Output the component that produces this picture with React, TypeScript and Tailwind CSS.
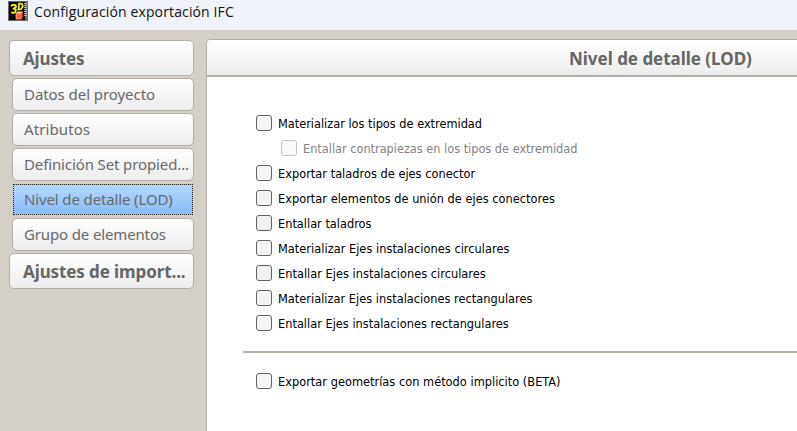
import React from "react";

type Option = { label: string; disabled?: boolean; spacing?: string };

const OPTIONS: Option[] = [
  { label: "Materializar los tipos de extremidad", spacing: "tracking-[-0.01px]" },
  { label: "Entallar contrapiezas en los tipos de extremidad", disabled: true, spacing: "tracking-[-0.02px]" },
  { label: "Exportar taladros de ejes conector", spacing: "tracking-[0.02px]" },
  { label: "Exportar elementos de unión de ejes conectores", spacing: "tracking-[0.02px]" },
  { label: "Entallar taladros" },
  { label: "Materializar Ejes instalaciones circulares", spacing: "tracking-[0.03px]" },
  { label: "Entallar Ejes instalaciones circulares", spacing: "tracking-[0.02px]" },
  { label: "Materializar Ejes instalaciones rectangulares", spacing: "tracking-[0.02px]" },
  { label: "Entallar Ejes instalaciones rectangulares", spacing: "tracking-[0.01px]" },
];

function AppIcon() {
  return (
    <svg width="20" height="20" viewBox="0 0 20 20" className="shrink-0">
      <rect width="20" height="20" fill="#6a6a6a" />
      <rect x="1" y="1" width="16" height="18" fill="#080808" />
      <path d="M16 2.5h3M16 4.5h3M16 6.5h3M16 8.5h3M16 10.5h3M16 12.5h3M16 14.5h3" stroke="#b4b4b4" strokeWidth="1" />
      <path d="M3 5.2 L4.5 4 L7.6 4.2 L8 5.8 L5.8 7.6 L7.8 8.8 L7.4 11 L5 12 L3.2 11.2" fill="none" stroke="#f4f010" strokeWidth="1.8" />
      <path d="M11.2 2.4 L10.4 8.6 L13 8.2 L14.8 5.6 L14.2 2.9 Z" fill="none" stroke="#f4f010" strokeWidth="1.7" />
      <path d="M8 12.5 L9.5 10.5 H15 L13.5 12.5 Z" fill="#ffc9b8" />
      <path d="M8 12.5 H13.5 V18 H8 Z" fill="#ff6544" stroke="#ffb199" strokeWidth="0.7" />
      <path d="M13.5 12.5 L15 10.5 V16 L13.5 18 Z" fill="#e02612" />
    </svg>
  );
}

function GroupButton({ label, spacing }: { label: string; spacing: string }) {
  return (
    <button className="flex h-9 w-[185px] items-center rounded-[5px] border border-[#b3ada5] bg-linear-to-b from-white to-[#ededed] pl-[13px] pt-[2px] text-left font-['Noto_Sans','Open_Sans',sans-serif] text-[17px] font-bold leading-6 text-[#666]">
      <span className={`whitespace-nowrap ${spacing}`}>{label}</span>
    </button>
  );
}

function ItemButton({ label, spacing, selected }: { label: string; spacing: string; selected?: boolean }) {
  return (
    <button
      className={`flex items-center text-left font-['Noto_Sans','Open_Sans',sans-serif] text-[15px] text-[#686868] border ${
        selected
          ? "my-px ml-[4px] h-[31px] w-[180px] pl-[10px] border-dotted border-[#222] bg-linear-to-b from-[#b3d8ff] to-[#86bdfb]"
          : "ml-[3px] h-[33px] w-[182px] pl-[11px] rounded-[5px] border-[#b3ada5] bg-linear-to-b from-white to-[#ededed]"
      }`}
    >
      <span className={`whitespace-nowrap ${spacing}`}>{label}</span>
    </button>
  );
}

function CheckRow({ label, disabled, spacing = "tracking-normal" }: Option) {
  return (
    <label className={`flex h-[25px] items-center gap-[6px] ${disabled ? "ml-[25px] text-[#838383]" : "text-black"}`}>
      <span className={`size-4 shrink-0 rounded-[3px] border ${disabled ? "border-[#c4c4c4] bg-[#f9f9f9]" : "border-[#626262] bg-[#f3f3f3]"}`} />
      <span className={`whitespace-nowrap pt-[2px] ${spacing}`}>{label}</span>
    </label>
  );
}

export default function App() {
  return (
    <div className="flex h-[431px] w-[797px] flex-col overflow-hidden bg-[#d4d0c8]">
      <header className="flex h-[30px] shrink-0 items-start gap-[6px] bg-[#f0f3f9] pl-2 pt-px">
        <AppIcon />
        <span className="whitespace-nowrap pt-px font-['Open_Sans','Noto_Sans',sans-serif] text-[14px] leading-5 tracking-[0.13px] text-[#111]">Configuración exportación IFC</span>
      </header>
      <div className="flex min-h-0 flex-1">
        <nav className="flex w-[206px] shrink-0 flex-col gap-[2px] pl-[9px] pt-[10px]">
          <GroupButton label="Ajustes" spacing="tracking-[-0.15px]" />
          <ItemButton label="Datos del proyecto" spacing="tracking-[-0.06px]" />
          <ItemButton label="Atributos" spacing="tracking-[0.1px]" />
          <ItemButton label="Definición Set propied..." spacing="tracking-[-0.12px]" />
          <ItemButton label="Nivel de detalle (LOD)" spacing="tracking-[-0.13px]" selected />
          <ItemButton label="Grupo de elementos" spacing="tracking-[-0.14px]" />
          <GroupButton label="Ajustes de import..." spacing="tracking-[-0.1px]" />
        </nav>
        <main className="mt-[9px] flex flex-1 flex-col rounded-tl-[5px] border-l border-t border-[#b3ada5] bg-white">
          <h1 className="flex h-[37px] shrink-0 items-center rounded-tl-[4px] border-b-2 border-[#b3ada5] bg-linear-to-b from-white to-[#ededed] pl-[362px] pt-[2px] font-['Noto_Sans','Open_Sans',sans-serif] text-[17px] font-bold leading-6 text-[#666]">
            <span className="whitespace-nowrap tracking-[-0.02px]">Nivel de detalle (LOD)</span>
          </h1>
          <section className="pl-[49px] pt-[33px] font-['DejaVu_Sans_Condensed','DejaVu_Sans',sans-serif] text-[12.65px] leading-[18px]">
            {OPTIONS.map((option) => (
              <CheckRow key={option.label} {...option} />
            ))}
            <hr className="-ml-[13px] mt-4 border-t-2 border-[#b3ada5]" />
            <div className="pt-[15px]">
              <CheckRow label="Exportar geometrías con método implicito (BETA)" spacing="tracking-[0.02px]" />
            </div>
          </section>
        </main>
      </div>
    </div>
  );
}
